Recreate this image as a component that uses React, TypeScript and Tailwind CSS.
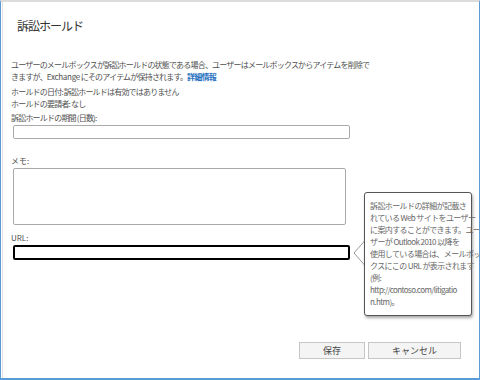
import React from 'react';

const jp = { fontFamily: '"Noto Sans CJK JP", "Noto Sans", sans-serif' };

export default function App() {
  return (
    <div
      className="relative w-[480px] h-[380px] bg-white border-t-2 border-t-[#dcdcdc] border-l border-l-[#5b9bd5] border-r border-r-[#5b9bd5] border-b-2 border-b-[#5b9bd5] text-[#505050] overflow-hidden"
      style={jp}
    >
      <div className="h-full border-l border-l-[#e4e4e4] ml-px flex flex-col">
        <h1 className="mt-[15px] ml-[14px] text-[12px] leading-[18px] tracking-[-1px] text-[#333] font-normal">訴訟ホールド</h1>

        <div className="mt-[24px] ml-[8px] text-[8px] leading-[12px] tracking-[-0.8px] whitespace-nowrap">
          <p>ユーザーのメールボックスが訴訟ホールドの状態である場合、ユーザーはメールボックスからアイテムを削除で</p>
          <p>
            きますが、<span className="tracking-[-0.3px]">Exchange</span> にそのアイテムが保持されます。
            <a className="text-[#1e6fbf] font-bold">詳細情報</a>
          </p>
          <p className="mt-[3px]">ホールドの日付: 訴訟ホールドは有効ではありません</p>
          <p className="leading-[11px]">ホールドの要請者: なし</p>
          <p className="mt-[3px]">訴訟ホールドの期間 (日数):</p>
        </div>
        <input className="ml-[10px] mt-[1px] w-[337px] h-[14px] border border-[#aaa] rounded-[2px] outline-none" />

        <p className="mt-[16px] ml-[8px] text-[8px] leading-[12px]">メモ:</p>
        <textarea className="ml-[10px] mt-[1px] w-[333px] h-[57px] border border-[#aaa] rounded-[2px] resize-none outline-none" />

        <p className="mt-[7px] ml-[8px] text-[8px] leading-[12px]">URL:</p>
        <input className="ml-[10px] mt-[1px] w-[337px] h-[15px] border-2 border-black rounded-[2px] outline-none" />

        <div className="mt-auto mb-[19px] flex justify-end gap-[3px] pr-[18px]">
          <button className="w-[66px] h-[17px] bg-[#f4f4f4] border border-[#c6c6c6] text-[9px] text-[#444]">保存</button>
          <button className="w-[93px] h-[17px] bg-[#f4f4f4] border border-[#c6c6c6] text-[9px] text-[#444]">キャンセル</button>
        </div>
      </div>

      <div className="absolute left-[352px] top-[190px] flex">
        <svg className="mt-[49px] -mr-px" width="12" height="24" viewBox="0 0 12 24">
          <path d="M11.5 0 L1 12 L11.5 24" fill="white" stroke="#999" strokeWidth="1" />
        </svg>
        <div className="w-[108px] h-[124px] bg-white border border-[#555] rounded-[3px] shadow-[1px_2px_3px_rgba(0,0,0,0.35)] pl-[5px] pt-[7px] text-[8px] leading-[12px] tracking-[-0.6px] text-[#666] whitespace-nowrap">
          <p>訴訟ホールドの詳細が記載さ</p>
          <p>れている Web サイトをユーザー</p>
          <p>に案内することができます。ユー</p>
          <p>ザーが Outlook 2010 以降を</p>
          <p>使用している場合は、メールボッ</p>
          <p>クスにこの URL が表示されます</p>
          <p>(例:</p>
          <p>http://contoso.com/litigatio</p>
          <p>n.htm)。</p>
        </div>
      </div>
    </div>
  );
}
